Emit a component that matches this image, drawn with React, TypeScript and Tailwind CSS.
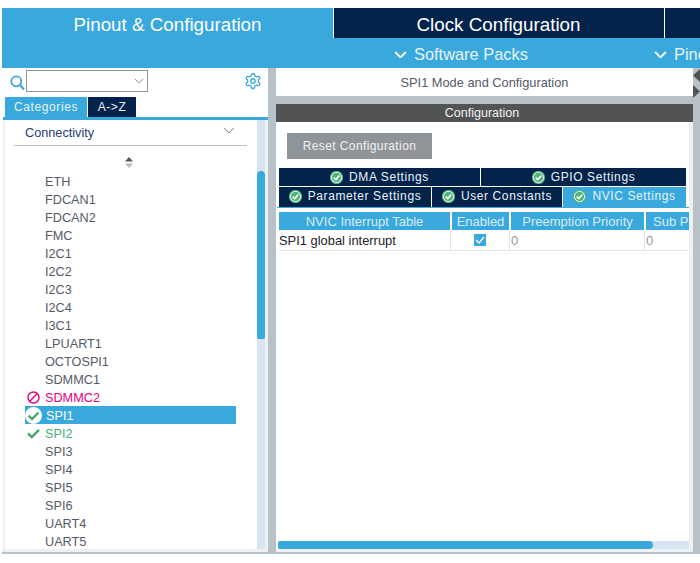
import { Settings } from "lucide-react";

const Check = ({ size = 13 }: { size?: number }) => (
  <svg width={size} height={size} viewBox="0 0 14 14" className="shrink-0">
    <circle cx="7" cy="7" r="6.5" fill="#ffffff" stroke="#4fb37c" strokeWidth="1.2" />
    <circle cx="7" cy="7" r="5" fill="#4fb37c" />
    <path d="M4 7.2 L6.2 9.3 L10 5" fill="none" stroke="#fff" strokeWidth="1.8" />
  </svg>
);

const Chevron = ({ w = 13, c = "#fff", sw = 2 }: { w?: number; c?: string; sw?: number }) => (
  <svg width={w} height={w * 0.6} viewBox="0 0 13 8" className="shrink-0">
    <path d="M1 1 L6.5 6.5 L12 1" fill="none" stroke={c} strokeWidth={sw} />
  </svg>
);

const items = ["ETH","FDCAN1","FDCAN2","FMC","I2C1","I2C2","I2C3","I2C4","I3C1","LPUART1","OCTOSPI1","SDMMC1","SDMMC2","SPI1","SPI2","SPI3","SPI4","SPI5","SPI6","UART4","UART5"];

function Row({ name }: { name: string }) {
  if (name === "SDMMC2")
    return (
      <div className="h-[18px] flex items-center pl-[22px] text-[#e6007e]">
        <svg width="13" height="13" viewBox="0 0 13 13" className="mr-[5px] shrink-0">
          <circle cx="6.5" cy="6.5" r="5.5" fill="none" stroke="#e6007e" strokeWidth="1.4" />
          <path d="M2.6 10.4 L10.4 2.6" stroke="#e6007e" strokeWidth="1.4" />
        </svg>
        <span className="pt-[3px]">{name}</span>
      </div>
    );
  if (name === "SPI1")
    return (
      <div className="h-[18px] flex items-center ml-[20px] w-[211px] bg-[#39a8dc] text-white">
        <svg width="17" height="17" viewBox="0 0 17 17" className="mr-[4px] shrink-0">
          <circle cx="8.5" cy="8.5" r="8.5" fill="#fff" />
          <path d="M3.5 8.5 L7 12 L13.5 5.5" fill="none" stroke="#45a873" strokeWidth="2.4" />
        </svg>
        <span className="pt-[3px]">{name}</span>
      </div>
    );
  if (name === "SPI2")
    return (
      <div className="h-[18px] flex items-center pl-[22px] text-[#45b37a]">
        <svg width="13" height="11" viewBox="0 0 13 11" className="mr-[5px] shrink-0">
          <path d="M1 5.5 L4.8 9 L12 1.8" fill="none" stroke="#45a873" strokeWidth="2.4" />
        </svg>
        <span className="pt-[3px]">{name}</span>
      </div>
    );
  return <div className="h-[18px] flex items-center pl-[40px] pt-[3px] text-[#545a66]">{name}</div>;
}

export default function App() {
  return (
    <div className="relative w-[700px] h-[563px] overflow-hidden bg-white flex flex-col pt-[8px] pl-[2px] text-[12px] font-['Liberation_Sans',Arial,sans-serif]">
      {/* top tabs */}
      <div className="flex h-[60px] shrink-0 bg-[#39a8dc]">
        <div className="w-[331px] h-[30px] flex items-center justify-center text-white text-[18.8px] pt-[4px]">Pinout &amp; Configuration</div>
        <div className="w-[331px] flex flex-col">
          <div className="h-[30px] border-l border-white bg-[#03234b] text-white text-[18.8px] flex items-center justify-center pr-[1px] pt-[4px]">Clock Configuration</div>
          <div className="h-[30px] flex items-center pl-[61px] gap-[7px] text-white text-[16.4px] whitespace-nowrap pt-[3px]">
            <Chevron />
            <span className="text-[#e8f4fb]">Software Packs</span>
          </div>
        </div>
        <div className="flex-1 flex flex-col min-w-0">
          <div className="h-[30px] border-l border-white bg-[#03234b]" />
          <div className="h-[30px] flex items-center gap-[7px] text-white text-[16.4px] whitespace-nowrap -ml-[10px] pt-[3px] overflow-hidden">
            <Chevron />
            <span className="text-[#e8f4fb]">Pinout</span>
          </div>
        </div>
      </div>

      {/* body */}
      <div className="flex h-[486px] shrink-0 bg-[#b7c1c7] pb-[2px] pr-[7px]">
        {/* left panel */}
        <div className="w-[266px] bg-white flex flex-col shrink-0">
          <div className="h-[29px] flex items-center pl-[8px] shrink-0">
            <svg width="15" height="16" viewBox="0 0 15 16" className="shrink-0">
              <circle cx="6.3" cy="6.3" r="5" fill="none" stroke="#39a8dc" strokeWidth="1.8" />
              <path d="M10 10 L14 14.5" stroke="#39a8dc" strokeWidth="2" />
            </svg>
            <div className="ml-[1px] w-[122px] h-[22px] border border-[#8f9499] flex items-center justify-end pr-[3px] mt-[-4px]">
              <Chevron w={10} c="#666" sw={1} />
            </div>
            <Settings size={18} strokeWidth={1.8} color="#39a8dc" className="ml-[96px] mt-[-4px] shrink-0" />
          </div>
          <div className="flex h-[20px] pl-[3px] shrink-0 tracking-[0.6px]">
            <div className="w-[82px] bg-[#39a8dc] text-[#e8f4fb] flex items-center justify-center">Categories</div>
            <div className="ml-[1px] w-[48px] bg-[#03234b] text-[#e8f4fb] flex items-center justify-center">A-&gt;Z</div>
          </div>
          <div className="h-[3px] ml-[1px] bg-[#39a8dc] shrink-0" />
          <div className="flex flex-1 min-h-0 border-l-[2px] border-[#eef0f2] ml-[1px] border-r-[3px]">
            <div className="flex-1 min-w-0 flex flex-col overflow-hidden text-[12.7px]">
              <div className="h-[26px] mx-[9px] w-[233px] border-b border-[#b7c1c7] flex items-center justify-between pl-[11px] pr-[12px] shrink-0">
                <span className="text-[#1f3c78] text-[12.7px] pt-[2px]">Connectivity</span>
                <span className="-mt-[3px]"><Chevron w={12} c="#666" sw={1} /></span>
              </div>
              <div className="h-[26px] flex items-center justify-center pr-[5px] pt-[6px] shrink-0">
                <svg width="8" height="11" viewBox="0 0 8 11">
                  <path d="M4 0 L8 4.5 L0 4.5 Z" fill="#555" />
                  <path d="M4 11 L8 6.5 L0 6.5 Z" fill="#bbb" />
                </svg>
              </div>
              {items.map((n) => <Row key={n} name={n} />)}
            </div>
            <div className="w-[8px] shrink-0 bg-[#d8e6f3] pt-[51px] pb-[210px]">
              <div className="h-full bg-[#39a8dc] rounded-t-[4px] rounded-b-[2px]" />
            </div>
          </div>
          <div className="h-[3px] bg-[#eef0f2] shrink-0" />
        </div>
        <div className="w-[8px] shrink-0" />
        {/* right panel */}
        <div className="flex-1 min-w-0 flex flex-col">
          <div className="h-[28px] bg-white flex items-center justify-center text-[#545a66] text-[12.8px] shrink-0 pt-[1px]">SPI1 Mode and Configuration</div>
          <div className="h-[8px] shrink-0" />
          <div className="h-[18px] bg-[#525454] text-[#f2f2f2] text-[12.5px] flex items-center justify-center shrink-0 pr-[5px]">Configuration</div>
          <div className="flex-1 bg-white flex flex-col border-r-[4px] border-b-[3px] border-[#eef0f2]">
            <div className="mt-[11px] ml-[11px] w-[145px] h-[26px] bg-[#8f9499] text-[#f2f2f2] tracking-[0.4px] flex items-center justify-center shrink-0">Reset Configuration</div>
            <div className="mt-[9px] ml-[3px] w-[407px] h-[18px] flex text-[#e8f4fb] tracking-[0.6px] shrink-0">
              <div className="w-[201px] bg-[#03234b] flex items-center justify-center gap-[6px]"><Check />DMA Settings</div>
              <div className="ml-px flex-1 bg-[#03234b] flex items-center justify-center gap-[6px]"><Check />GPIO Settings</div>
            </div>
            <div className="mt-[1px] ml-[3px] w-[407px] h-[20px] flex text-[#e8f4fb] tracking-[0.6px] shrink-0">
              <div className="w-[152px] bg-[#03234b] flex items-center justify-center gap-[6px] pb-[2px]"><Check />Parameter Settings</div>
              <div className="ml-px w-[130px] bg-[#03234b] flex items-center justify-center gap-[6px] pb-[2px]"><Check />User Constants</div>
              <div className="ml-px flex-1 bg-[#39a8dc] flex items-center justify-center gap-[6px] pb-[2px]"><Check />NVIC Settings</div>
            </div>
            <div className="h-px ml-[1px] w-[412px] bg-[#39a8dc] shrink-0" />
            <div className="mt-[4px] ml-[3px] w-[410px] flex gap-[2px] h-[18px] text-[#d8edf8] text-[13px] shrink-0 overflow-hidden">
              <div className="w-[171px] pt-[1px] bg-[#39a8dc] flex items-center justify-center">NVIC Interrupt Table</div>
              <div className="w-[57px] pt-[1px] bg-[#39a8dc] flex items-center justify-center">Enabled</div>
              <div className="w-[133px] pt-[1px] bg-[#39a8dc] flex items-center justify-center">Preemption Priority</div>
              <div className="w-[43px] pt-[1px] bg-[#39a8dc] flex items-center pl-[7px] whitespace-nowrap">Sub P</div>
            </div>
            <div className="ml-[3px] w-[410px] h-[20px] flex border-b border-[#e4e4e4] shrink-0 mt-px text-[12.9px]">
              <div className="w-[172px] border-r border-[#e4e4e4] flex items-center text-[#222]">SPI1 global interrupt</div>
              <div className="w-[59px] border-r border-[#e4e4e4] flex items-center justify-center pb-[1px]">
                <div className="w-[12px] h-[12px] bg-[#39a8dc] flex items-center justify-center">
                  <svg width="10" height="8" viewBox="0 0 10 8"><path d="M1 4 L4 7 L9 1" fill="none" stroke="#fff" strokeWidth="1.3" /></svg>
                </div>
              </div>
              <div className="w-[135px] border-r border-[#e4e4e4] flex items-center pl-px text-[#999]">0</div>
              <div className="flex-1 flex items-center pl-px text-[#999]">0</div>
            </div>
            <div className="flex-1" />
            <div className="ml-[2px] w-[411px] h-[8px] bg-[#d8e6f3] shrink-0">
              <div className="w-[375px] h-full bg-[#39a8dc] rounded-r-[4px] rounded-l-[2px]" />
            </div>
          </div>
        </div>
      </div>
      <div className="flex-1 bg-white" />
      {/* collapse arrows */}
      <div className="absolute left-[693px] top-[69px] flex flex-col gap-[3px]">
        <svg width="7" height="13" viewBox="0 0 7 13"><path d="M0 6.5 L7 0 V13 Z" fill="#525454" /></svg>
        <svg width="7" height="13" viewBox="0 0 7 13"><path d="M7 6.5 L0 0 V13 Z" fill="#525454" /></svg>
      </div>
    </div>
  );
}
